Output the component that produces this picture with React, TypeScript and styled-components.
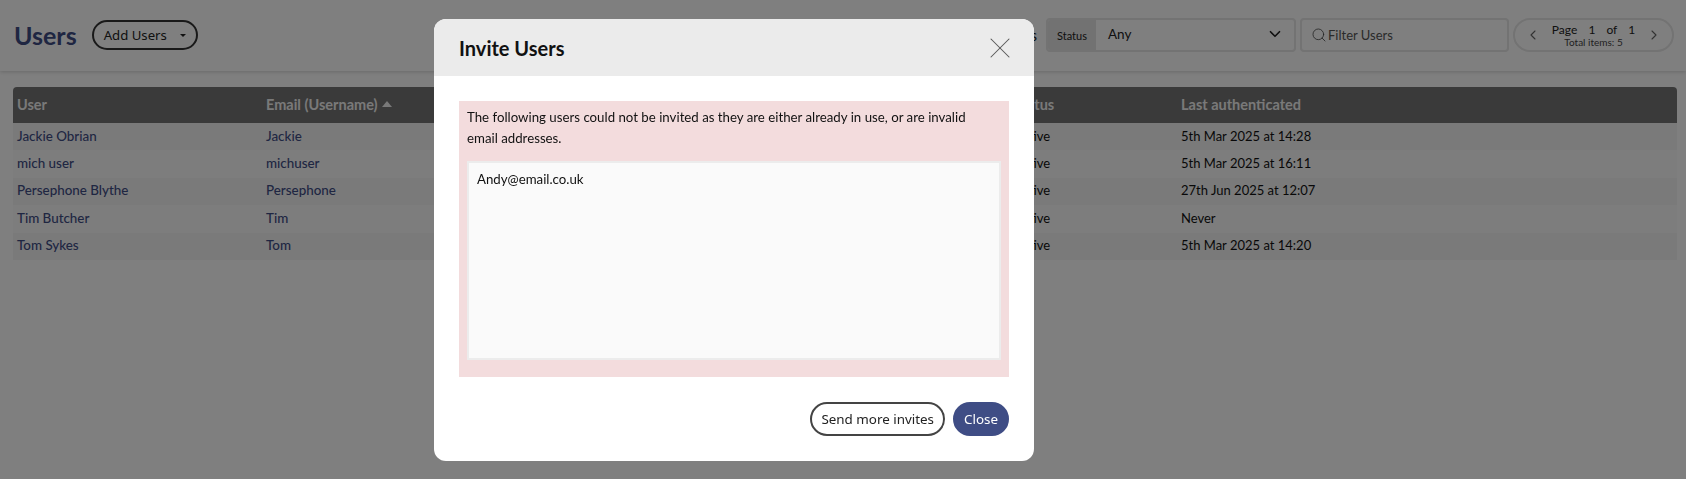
import styled, { createGlobalStyle } from "styled-components";
import { ChevronDown, ChevronLeft, ChevronRight, Search, X } from "lucide-react";

const GlobalStyle = createGlobalStyle`
    html, body {
        margin: 0;
        padding: 0;
        background: #fff;
        font-family: "Lato", "Noto Sans", sans-serif;
        color: #111;
    }
`;

const Page = styled.div`
    height: 479px;
    overflow: hidden;
`;

const Toolbar = styled.div`
    height: 71px;
    box-sizing: border-box;
    padding: 18px 12px 0 13px;
    display: flex;
    align-items: flex-start;
    box-shadow: 0 1px 4px rgba(0, 0, 0, 0.18);
`;

const Title = styled.h1`
    margin: 0 15px 0 1px;
    font-size: 25px;
    line-height: 34px;
    font-weight: 700;
    color: #3f4d85;
`;

const AddButton = styled.button`
    height: 30px;
    width: 106px;
    margin-top: 2px;
    padding: 0 0 0 10px;
    display: flex;
    align-items: center;
    border: 2px solid #333;
    border-radius: 15px;
    background: transparent;
    font-family: "Noto Sans", sans-serif;
    font-size: 13.2px;
    color: #222;
`;

const Caret = styled.span`
    margin-left: 13px;
    border-left: 3px solid transparent;
    border-right: 3px solid transparent;
    border-top: 3px solid #222;
`;

const Filters = styled.div`
    margin-left: auto;
    display: flex;
    align-items: center;
    gap: 4px;
`;

const FilterLabel = styled.span`
    font-size: 15px;
    margin-right: 5px;
`;

const StatusGroup = styled.div`
    width: 250px;
    height: 34px;
    box-sizing: border-box;
    display: flex;
    border: 2px solid #e6e6e6;
    border-radius: 4px;
    overflow: hidden;
`;

const StatusLabel = styled.span`
    width: 48px;
    display: flex;
    align-items: center;
    justify-content: center;
    background: #e4e4e4;
    font-size: 11px;
    color: #222;
`;

const StatusValue = styled.div`
    flex: 1;
    padding: 0 10px 2px 12px;
    display: flex;
    align-items: center;
    justify-content: space-between;
    font-size: 13.5px;
    color: #222;
`;

const FilterInput = styled.div`
    width: 209px;
    height: 34px;
    box-sizing: border-box;
    padding-left: 9px;
    display: flex;
    align-items: center;
    gap: 1px;
    border: 2px solid #e6e6e6;
    border-radius: 4px;
    font-size: 13px;
    color: #555;
`;

const Pager = styled.div`
    width: 161px;
    height: 34px;
    box-sizing: border-box;
    padding: 0 10px;
    display: flex;
    align-items: center;
    justify-content: space-between;
    border: 2px solid #e6e6e6;
    border-radius: 17px;
    color: #666;
`;

const PagerText = styled.div`
    display: flex;
    flex-direction: column;
    align-items: center;
    color: #222;
`;

const PageLine = styled.span`
    font-size: 12px;
    line-height: 13px;
    word-spacing: 8px;
`;

const TotalLine = styled.span`
    font-size: 10px;
    line-height: 12px;
    color: #444;
`;

const TableArea = styled.div`
    margin: 16px 9px 0 13px;
`;

const HeaderRow = styled.div`
    height: 36px;
    box-sizing: border-box;
    padding: 0 0 2px 4px;
    display: grid;
    grid-template-columns: 249px 748px 167px 1fr;
    align-items: center;
    background: #747474;
    border-radius: 4px 4px 0 0;
`;

const HeaderCell = styled.span`
    font-size: 14.5px;
    font-weight: 700;
    color: #f2f2f2;
    display: flex;
    align-items: center;
    gap: 4px;
`;

const SortArrow = styled.span`
    border-left: 5px solid transparent;
    border-right: 5px solid transparent;
    border-bottom: 6px solid #f2f2f2;
`;

const Row = styled.div<{ $striped: boolean }>`
    height: 27.4px;
    box-sizing: border-box;
    padding: 0 0 2px 4px;
    display: grid;
    grid-template-columns: 249px 748px 167px 1fr;
    align-items: center;
    background: ${(p) => (p.$striped ? "#f5f5f5" : "#fafafa")};
`;

const LinkCell = styled.span`
    font-size: 13.4px;
    font-weight: 500;
    color: #3f4d85;
`;

const Cell = styled.span`
    font-size: 13px;
    color: #111;
`;

const Backdrop = styled.div`
    position: fixed;
    inset: 0;
    padding: 19px 0 0 434px;
    display: flex;
    align-items: flex-start;
    background: rgba(0, 0, 0, 0.5);
`;

const Modal = styled.div`
    width: 600px;
    height: 442px;
    display: flex;
    flex-direction: column;
    background: #fff;
    border-radius: 12px;
    overflow: hidden;
`;

const ModalHeader = styled.div`
    height: 57px;
    flex: none;
    padding: 0 25px;
    display: flex;
    align-items: center;
    justify-content: space-between;
    background: #ebebeb;
`;

const ModalTitle = styled.h2`
    margin: 0;
    font-size: 20px;
    font-weight: 700;
    color: #111;
`;

const CloseIcon = styled(X)`
    margin-right: -9px;
`;

const ModalBody = styled.div`
    padding: 25px 25px 0;
`;

const Alert = styled.div`
    height: 276px;
    box-sizing: border-box;
    padding: 6px 8px 0;
    background: #f3dcdd;
    font-size: 13.25px;
    line-height: 21px;
    color: #111;
`;

const AlertMessage = styled.p`
    margin: 0;
    max-width: 510px;
`;

const EmailList = styled.div`
    height: 199px;
    margin-top: 12px;
    padding: 6px 8px;
    box-sizing: border-box;
    background: #fafafa;
    border: 2px solid #ececec;
`;

const ModalFooter = styled.div`
    padding: 25px 25px 0;
    display: flex;
    justify-content: flex-end;
    gap: 8px;
`;

const Button = styled.button<{ $primary?: boolean }>`
    height: 34px;
    padding: 0 9px;
    border: 2px solid ${(p) => (p.$primary ? "#3f4d85" : "#444")};
    border-radius: 17px;
    background: ${(p) => (p.$primary ? "#3f4d85" : "#fff")};
    color: ${(p) => (p.$primary ? "#fff" : "#222")};
    font-family: "Noto Sans", sans-serif;
    font-size: 13.4px;
`;

const users = [
    { name: "Jackie Obrian", email: "Jackie", last: "5th Mar 2025 at 14:28" },
    { name: "mich user", email: "michuser", last: "5th Mar 2025 at 16:11" },
    { name: "Persephone Blythe", email: "Persephone", last: "27th Jun 2025 at 12:07" },
    { name: "Tim Butcher", email: "Tim", last: "Never" },
    { name: "Tom Sykes", email: "Tom", last: "5th Mar 2025 at 14:20" },
];

export default function App() {
    return (
        <Page>
            <GlobalStyle />
            <Toolbar>
                <Title>Users</Title>
                <AddButton>
                    Add Users
                    <Caret />
                </AddButton>
                <Filters>
                    <FilterLabel>Filters</FilterLabel>
                    <StatusGroup>
                        <StatusLabel>Status</StatusLabel>
                        <StatusValue>
                            Any
                            <ChevronDown size={18} strokeWidth={2.2} color="#222" />
                        </StatusValue>
                    </StatusGroup>
                    <FilterInput>
                        <Search size={16} strokeWidth={1.2} color="#444" />
                        Filter Users
                    </FilterInput>
                    <Pager>
                        <ChevronLeft size={16} strokeWidth={1.6} />
                        <PagerText>
                            <PageLine>Page 1 of 1</PageLine>
                            <TotalLine>Total items: 5</TotalLine>
                        </PagerText>
                        <ChevronRight size={16} strokeWidth={1.6} />
                    </Pager>
                </Filters>
            </Toolbar>
            <TableArea>
                <HeaderRow>
                    <HeaderCell>User</HeaderCell>
                    <HeaderCell>
                        Email (Username)
                        <SortArrow />
                    </HeaderCell>
                    <HeaderCell>Status</HeaderCell>
                    <HeaderCell>Last authenticated</HeaderCell>
                </HeaderRow>
                {users.map((u, i) => (
                    <Row key={u.email} $striped={i % 2 === 0}>
                        <LinkCell>{u.name}</LinkCell>
                        <LinkCell>{u.email}</LinkCell>
                        <Cell>Active</Cell>
                        <Cell>{u.last}</Cell>
                    </Row>
                ))}
            </TableArea>
            <Backdrop>
                <Modal>
                    <ModalHeader>
                        <ModalTitle>Invite Users</ModalTitle>
                        <CloseIcon size={36} strokeWidth={0.7} color="#555" />
                    </ModalHeader>
                    <ModalBody>
                        <Alert>
                            <AlertMessage>
                                The following users could not be invited as they are either already in use, or are
                                invalid email addresses.
                            </AlertMessage>
                            <EmailList>Andy@email.co.uk</EmailList>
                        </Alert>
                    </ModalBody>
                    <ModalFooter>
                        <Button>Send more invites</Button>
                        <Button $primary>Close</Button>
                    </ModalFooter>
                </Modal>
            </Backdrop>
        </Page>
    );
}
